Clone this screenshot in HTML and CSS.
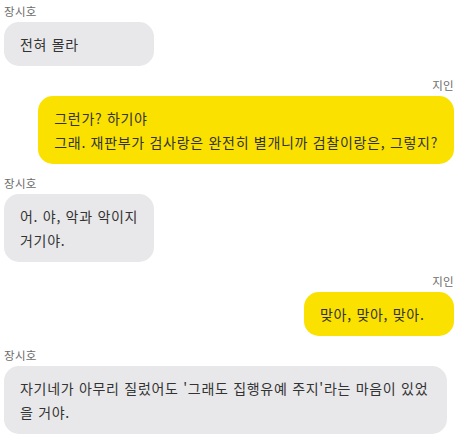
FILE: index.html
```html
<!DOCTYPE html>
<html lang="ko">
<head>
<meta charset="utf-8">
<link rel="stylesheet" href="styles.css">
</head>
<body>
<div class="chat">
  <div class="msg left">
    <div class="name">장시호</div>
    <div class="bubble">전혀 몰라</div>
  </div>
  <div class="msg right">
    <div class="name">지인</div>
    <div class="bubble">그런가? 하기야<br>그래. 재판부가 검사랑은 완전히 별개니까 검찰이랑은, 그렇지?</div>
  </div>
  <div class="msg left">
    <div class="name">장시호</div>
    <div class="bubble">어. 야, 악과 악이지<br>거기야.</div>
  </div>
  <div class="msg right">
    <div class="name">지인</div>
    <div class="bubble">맞아, 맞아, 맞아.</div>
  </div>
  <div class="msg left">
    <div class="name">장시호</div>
    <div class="bubble">자기네가 아무리 질렀어도 '그래도 집행유예 주지'라는 마음이 있었을 거야.</div>
  </div>
</div>
</body>
</html>
```
FILE: styles.css
```css
html, body {
  margin: 0;
  padding: 0;
  background: #ffffff;
}
body {
  font-family: "Noto Sans CJK KR", "Noto Sans", sans-serif;
  color: #333333;
}
.chat {
  display: flex;
  flex-direction: column;
  gap: 12px;
  padding: 4px 5px 4px 4px;
}
.msg {
  display: flex;
  flex-direction: column;
  gap: 3px;
}
.msg.left { align-items: flex-start; }
.msg.right { align-items: flex-end; }
.name {
  font-size: 11.5px;
  line-height: 15px;
  letter-spacing: 0.3px;
  color: #6b6b6b;
}
.bubble {
  font-size: 14px;
  line-height: 24px;
  letter-spacing: 0.7px;
  padding: 10px 16px;
  border-radius: 15px;
  min-width: 118px;
  max-width: 411px;
}
.left .bubble { background: #e8e8ea; }
.right .bubble { background: #fae100; }
```
